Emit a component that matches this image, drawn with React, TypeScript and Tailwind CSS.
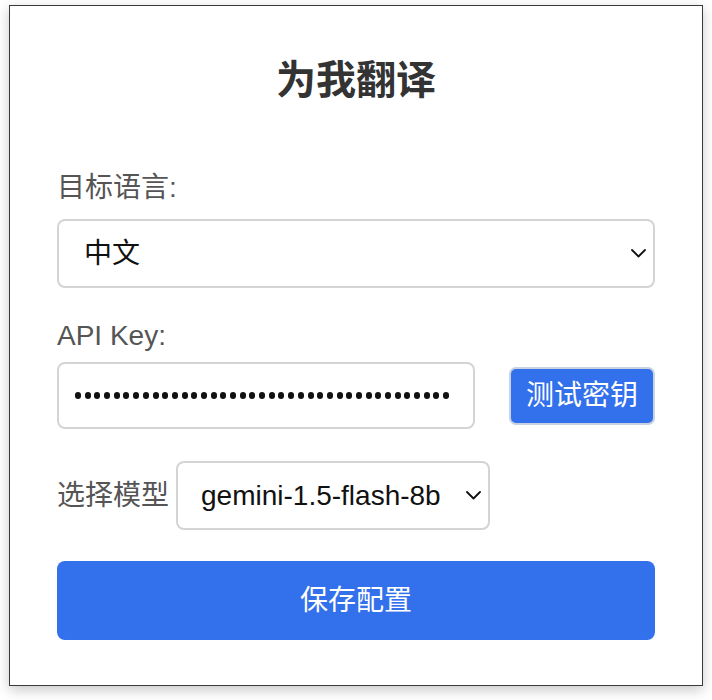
import React from "react";

const FONT = { fontFamily: '"Liberation Sans", "Noto Sans CJK SC", sans-serif' };

function Chevron() {
  return (
    <svg width="15" height="9" viewBox="0 0 15 9" fill="none">
      <path d="M1 1 L7.5 7.5 L14 1" stroke="#111" strokeWidth="1.8" strokeLinecap="round" strokeLinejoin="round" />
    </svg>
  );
}

export default function App() {
  const dots = Array.from({ length: 39 });
  return (
    <div className="min-h-[700px] w-[712px] bg-white" style={FONT}>
      <div className="pt-[5px] pl-[9px]">
        <div className="w-[694px] border border-[#3a3a3a] bg-white pl-[47px] pr-[47px] pt-[50px] pb-[45px] shadow-[0_4px_12px_rgba(0,0,0,0.22)]">
          <h1 className="h-[48px] text-center text-[40px] font-bold leading-[48px] text-[#333]">为我翻译</h1>

          <div className="mt-[67px] h-[34px] text-[28px] leading-[34px] text-[#555]">目标语言:</div>
          <div className="mt-[14px] flex h-[69px] items-center justify-between rounded-[8px] border-2 border-[#d4d4d4] pl-[25px] pr-[7px]">
            <span className="text-[28px] text-[#111]">中文</span>
            <Chevron />
          </div>

          <div className="mt-[31px] h-[34px] text-[28px] leading-[34px] text-[#555]">API Key:</div>
          <div className="mt-[9px] flex items-center gap-[34px]">
            <div className="flex h-[67px] w-[418px] items-center gap-[3.7px] overflow-hidden rounded-[8px] border-2 border-[#d4d4d4] pl-[16px]" aria-label="password">
              {dots.map((_, i) => (
                <span key={i} className="h-[6.4px] w-[6px] shrink-0 rounded-full bg-[#111]" />
              ))}
            </div>
            <button className="flex h-[58px] w-[146px] items-center justify-center rounded-[7px] border-2 border-[#c9d2e3] bg-[#3370eb] text-[28px] text-white">
              测试密钥
            </button>
          </div>

          <div className="mt-[32px] flex h-[69px] items-center gap-[7px]">
            <span className="text-[28px] text-[#555]">选择模型</span>
            <div className="flex h-[69px] w-[314px] items-center justify-between rounded-[8px] border-2 border-[#d4d4d4] pl-[23px] pr-[7px]">
              <span className="text-[28px] text-[#111]">gemini-1.5-flash-8b</span>
              <Chevron />
            </div>
          </div>

          <button className="mt-[31px] flex h-[79px] w-full items-center justify-center rounded-[8px] bg-[#3370eb] text-[28px] text-white">
            保存配置
          </button>
        </div>
      </div>
    </div>
  );
}
